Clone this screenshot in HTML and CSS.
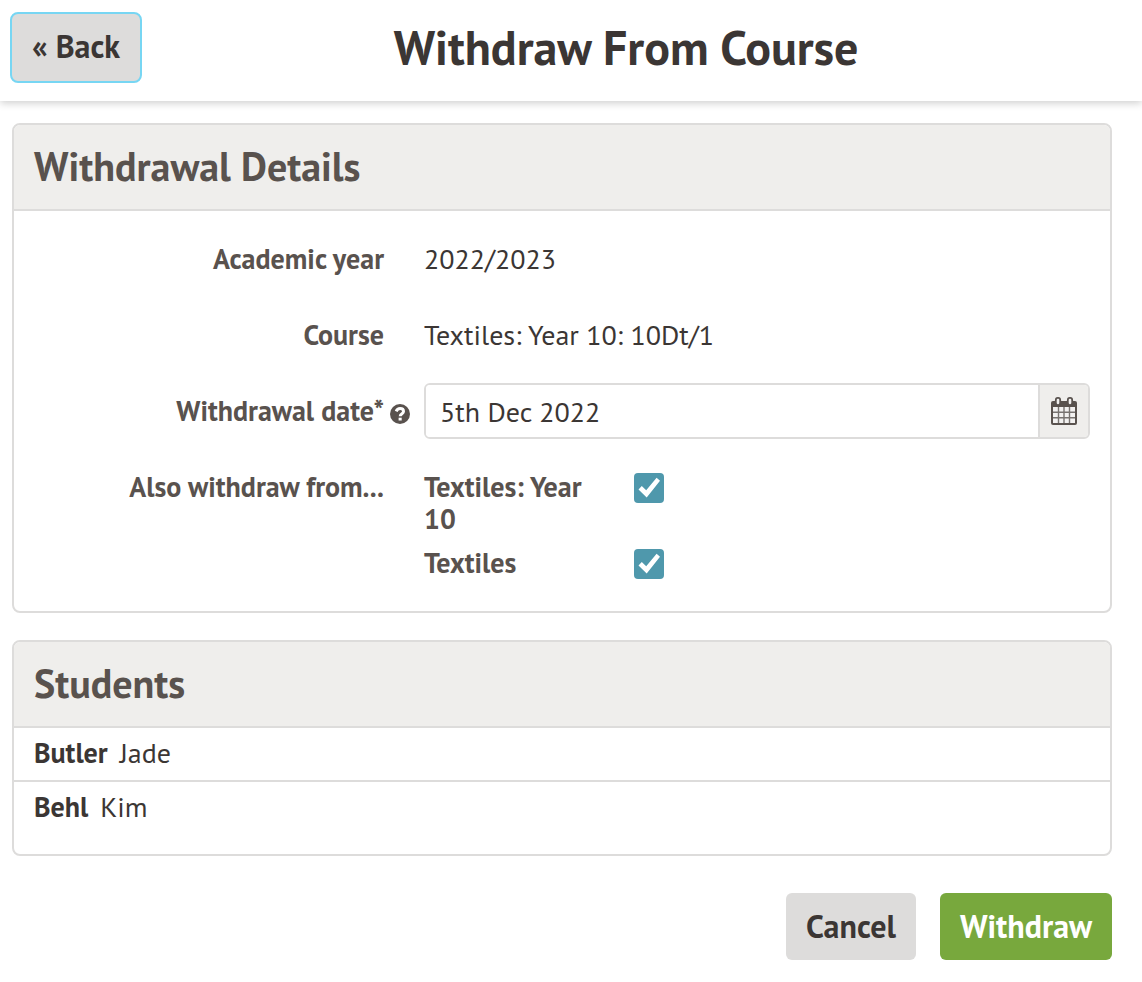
FILE: index.html
```
<!DOCTYPE html>
<html lang="en">

<head>
	<meta charset="UTF-8">
	<meta name="viewport" content="width=device-width, initial-scale=1.0">
	<title>Withdraw From Course</title>
	<link rel="stylesheet" href="styles.css">
</head>

<body>
	<header class="topbar">
		<button class="btn btn-back" type="button">« Back</button>
		<h1 class="title">Withdraw From Course</h1>
	</header>

	<main class="content">
		<section class="panel">
			<h2 class="panel-title">Withdrawal Details</h2>
			<div class="form">
				<div class="row">
					<span class="label">Academic year</span>
					<span class="value">2022/2023</span>
				</div>
				<div class="row">
					<span class="label">Course</span>
					<span class="value">Textiles: Year 10: 10Dt/1</span>
				</div>
				<div class="row">
					<label class="label" for="date">Withdrawal date*</label>
					<svg class="help" viewBox="0 0 20 20">
						<circle cx="10" cy="10" r="10" fill="#59524e" />
						<path d="M6.2 7.3C7 5.4 8.3 4.6 10.1 4.6c2 0 3.4 1.2 3.4 2.9 0 2.3-3.3 2.1-3.3 4.8" fill="none" stroke="#fff" stroke-width="3" />
						<path d="M8.6 13.7h3.1v2.8H8.6z" fill="#fff" />
					</svg>
					<div class="date-field">
						<input class="date-input" id="date" type="text" value="5th Dec 2022">
						<button class="date-btn" type="button" aria-label="Open calendar">
							<svg class="calendar" viewBox="0 0 26 28">
								<path d="M2 4h22q2 0 2 2v20q0 2-2 2H2q-2 0-2-2V6q0-2 2-2z" fill="#59524e" />
								<path d="M2 10h22v16H2z" fill="#f2f1f0" />
								<path d="M7.5 10v16M13 10v16M18.5 10v16M2 15.3h22M2 20.7h22" stroke="#777370" stroke-width="1.4" />
								<rect x="4.8" y=".9" width="4.4" height="7.2" rx="2" fill="#f2f1f0" stroke="#59524e" stroke-width="1.8" />
								<rect x="16.8" y=".9" width="4.4" height="7.2" rx="2" fill="#f2f1f0" stroke="#59524e" stroke-width="1.8" />
							</svg>
						</button>
					</div>
				</div>
				<div class="row">
					<span class="label">Also withdraw from...</span>
					<div class="checks">
						<label class="check">
							<span class="check-text">Textiles: Year 10</span>
							<svg class="box" viewBox="0 0 30 30">
								<path d="M22.6 4.7L26 7.8 12.7 24.4 4.5 16.6 7.8 13l4.4 4.2z" />
							</svg>
						</label>
						<label class="check">
							<span class="check-text">Textiles</span>
							<svg class="box" viewBox="0 0 30 30">
								<path d="M22.6 4.7L26 7.8 12.7 24.4 4.5 16.6 7.8 13l4.4 4.2z" />
							</svg>
						</label>
					</div>
				</div>
			</div>
		</section>

		<section class="panel">
			<h2 class="panel-title">Students</h2>
			<ul class="students">
				<li class="student"><b class="surname">Butler</b><span class="forename">Jade</span></li>
				<li class="student"><b class="surname">Behl</b><span class="forename">Kim</span></li>
			</ul>
		</section>

		<div class="actions">
			<button class="btn btn-cancel" type="button">Cancel</button>
			<button class="btn btn-submit" type="button">Withdraw</button>
		</div>
	</main>
</body>

</html>
```

FILE: styles.css
```
* {
	box-sizing: border-box;
}

body {
	margin: 0;
	background: #fff;
	color: #3b3634;
	font: 28px/32px "PT Sans", Lato, "Noto Sans", sans-serif;
}

.topbar {
	display: flex;
	align-items: flex-start;
	height: 101px;
	padding: 12px 32px 0 10px;
	box-shadow: 0 2px 8px rgba(0, 0, 0, .2);
}

.title {
	flex: 1;
	margin: 3px 0 0;
	font-size: 48px;
	line-height: 64px;
	text-align: center;
	white-space: nowrap;
}

.btn {
	height: 67px;
	padding: 0 0 2px;
	border: 0;
	border-radius: 6px;
	background: #dddcdb;
	color: #3b3634;
	font: bold 32px/40px "PT Sans", Lato, "Noto Sans", sans-serif;
	white-space: nowrap;
}

.btn-back {
	width: 132px;
	height: 71px;
	padding-bottom: 4px;
	border: 2px solid #77d6f3;
	border-radius: 8px;
}

.content {
	padding: 22px 30px 0 12px;
}

.panel {
	margin-bottom: 27px;
	border: 2px solid #dddcdb;
	border-radius: 8px;
	overflow: hidden;
}

.panel-title {
	height: 86px;
	margin: 0;
	padding: 0 20px;
	border-bottom: 2px solid #dddcdb;
	background: #efeeec;
	color: #59524e;
	font-size: 40px;
	line-height: 82px;
}

.form {
	display: grid;
	gap: 20px;
	padding: 20px 20px 32px 0;
}

.row {
	display: grid;
	grid-template-columns: 370px 40px 1fr;
	min-height: 56px;
}

.label {
	padding-top: 12px;
	color: #59524e;
	font-weight: bold;
	text-align: right;
	white-space: nowrap;
}

.value,
.checks {
	grid-column: 3;
	padding-top: 12px;
}

.help {
	width: 20px;
	height: 20px;
	margin: 21px 0 0 6px;
}

.date-field {
	display: flex;
	height: 56px;
	border: 2px solid #dddcdb;
	border-radius: 6px;
	overflow: hidden;
}

.date-input {
	flex: 1;
	min-width: 0;
	padding: 2px 14px 0;
	border: 0;
	background: #fff;
	color: #3b3634;
	font: inherit;
}

.date-btn {
	display: flex;
	align-items: center;
	justify-content: center;
	width: 50px;
	padding: 0 1px 0 0;
	border: 0;
	border-left: 2px solid #dddcdb;
	background: #efeeec;
}

.calendar {
	width: 26px;
	height: 28px;
}

.checks {
	display: grid;
	gap: 12px;
}

.check {
	display: grid;
	grid-template-columns: 170px 30px;
	column-gap: 40px;
	min-height: 32px;
	color: #59524e;
	font-weight: bold;
}

.box {
	width: 30px;
	height: 30px;
	margin-top: 2px;
	border-radius: 4px;
	background: #4f98ac;
	fill: #fff;
}

.students {
	margin: 0;
	padding: 0 0 20px;
	list-style: none;
}

.student {
	display: flex;
	gap: 12px;
	padding: 9px 20px 11px;
}

.student + .student {
	border-top: 2px solid #dddcdb;
}

.actions {
	display: flex;
	justify-content: flex-end;
	gap: 24px;
	padding-top: 10px;
}

.btn-cancel {
	width: 130px;
}

.btn-submit {
	width: 172px;
	background: #78a83d;
	color: #fff;
}
```
